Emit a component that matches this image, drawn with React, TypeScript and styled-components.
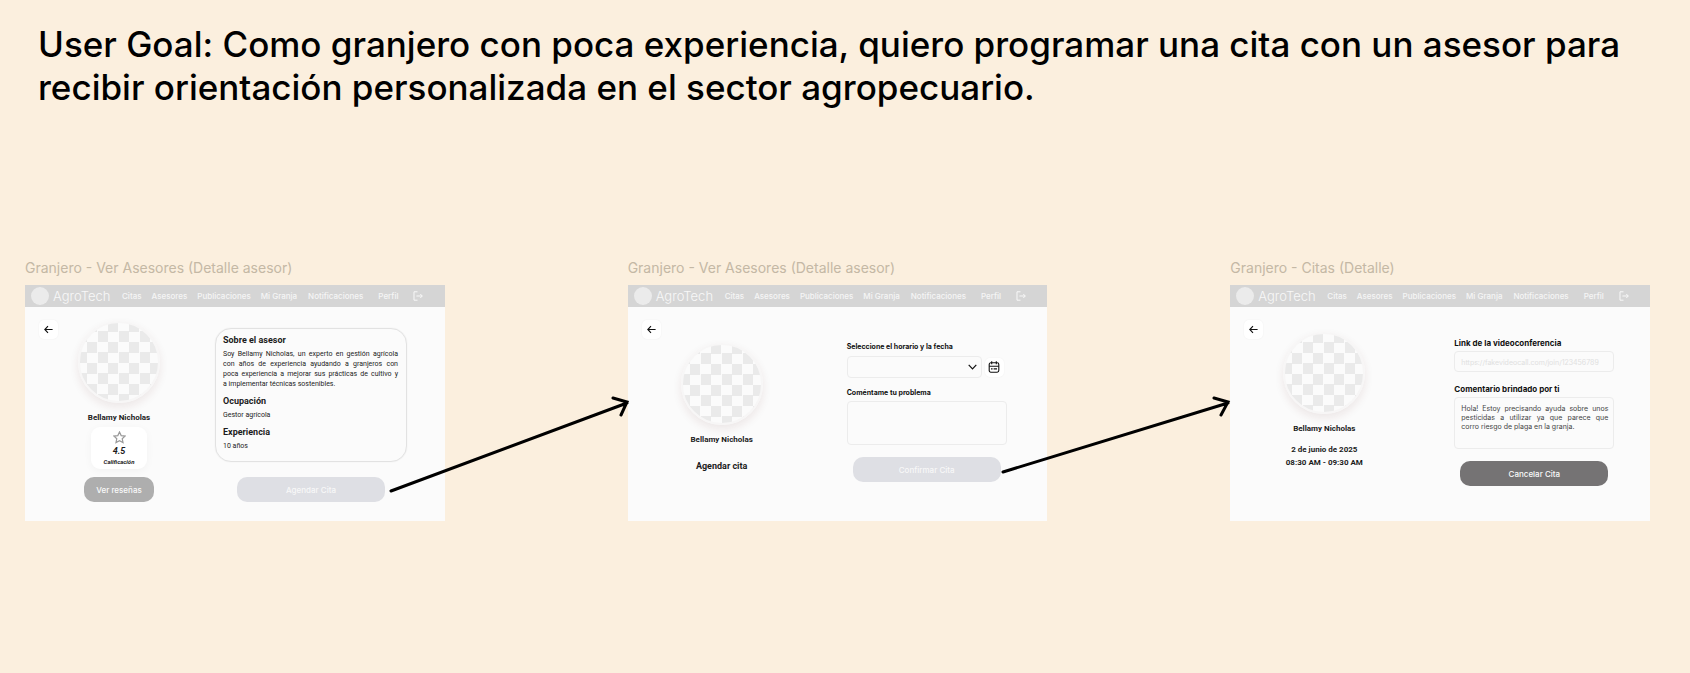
import React from "react";
import styled, { createGlobalStyle } from "styled-components";

const GlobalStyle = createGlobalStyle`
  *, *::before, *::after { box-sizing: border-box; }
  body {
    margin: 0;
    background: #fbefde;
    font-family: Roboto, "Liberation Sans", sans-serif;
    color: #1c1c1c;
  }
  h1, h2, h3, p, ul { margin: 0; padding: 0; }
  button, input, select, textarea { font-family: inherit; }
`;

const Page = styled.main`
  display: flex;
  flex-direction: column;
  gap: 150px;
  padding: 23px 40px 60px 25px;
`;

const Goal = styled.h1`
  padding: 0 0 0 13px;
  font: 500 35px/43px Inter, "Liberation Sans", sans-serif;
  color: #000;
`;

const Flow = styled.section`
  position: relative;
  display: grid;
  grid-template-columns: repeat(3, minmax(0, 1fr));
  column-gap: 183px;
`;

const Frame = styled.article`
  display: flex;
  flex-direction: column;
  gap: 8px;
`;

const FrameName = styled.h2`
  font: 400 14px/18px Inter, "Liberation Sans", sans-serif;
  color: #c4b8a5;
  white-space: nowrap;
`;

const Screen = styled.div`
  display: flex;
  flex-direction: column;
  height: 236px;
  background: #fbfbfb;
`;

const TopBar = styled.header`
  display: flex;
  align-items: center;
  height: 22px;
  padding: 0 6px;
  background: #d5d5d5;
`;

const Brand = styled.a`
  display: flex;
  align-items: center;
  gap: 4px;
  width: 91px;
  font: 300 13px/18px Inter, sans-serif;
  color: #f8f8f8;
  text-decoration: none;
`;

const Logo = styled.span`
  width: 18px;
  height: 18px;
  border-radius: 50%;
  background: #ebebeb;
`;

const Nav = styled.nav`
  display: flex;
  align-items: center;
  gap: 11px;
`;

const Links = styled.div<{ $gap: number }>`
  display: flex;
  align-items: center;
  gap: ${(p) => p.$gap}px;
`;

const NavLink = styled.a`
  font: 500 8px/12px Inter, sans-serif;
  color: #f5f5f5;
  text-decoration: none;
  white-space: nowrap;
`;

const IconButton = styled.button`
  display: flex;
  align-items: center;
  justify-content: center;
  flex: none;
  width: 19px;
  height: 19px;
  padding: 0;
  border: 0;
  border-radius: 5px;
  background: #fff;
  color: #111;
  box-shadow: 0 0 2px rgba(0, 0, 0, 0.06);
`;

const LogoutButton = styled(IconButton)`
  width: 10px;
  height: 10px;
  background: none;
  box-shadow: none;
  color: #f8f8f8;
`;

const Content = styled.div`
  display: grid;
  grid-template-columns: 19px 122px 1fr;
  padding: 13px 14px 0;
`;

const Profile = styled.div<{ $top: number }>`
  display: flex;
  flex-direction: column;
  align-items: center;
  padding-top: ${(p) => p.$top}px;
`;

const Avatar = styled.div`
  width: 82px;
  height: 82px;
  border: 2px solid #f7f6f6;
  border-radius: 50%;
  background: conic-gradient(#fbfbfb 25%, #eaeaea 0 50%, #fbfbfb 0 75%, #eaeaea 0) 7px -2px / 21px 21px;
  box-shadow: 0 4px 10px rgba(90, 20, 20, 0.09);
`;

const Name = styled.h3`
  margin-top: 10px;
  font-size: 8px;
  line-height: 10px;
  font-weight: 700;
`;

const Rating = styled.div`
  display: flex;
  flex-direction: column;
  align-items: center;
  width: 56px;
  height: 42px;
  margin-top: 4px;
  padding-top: 4px;
  border-radius: 9px;
  background: #fff;
  box-shadow: 0 2px 8px rgba(0, 0, 0, 0.04);
  font-style: italic;
  font-weight: 700;
`;

const Score = styled.p`
  font-size: 9px;
  line-height: 14px;
`;

const ScoreLabel = styled.p`
  font-size: 6px;
  line-height: 8px;
`;

const tones = {
  grey: ["#aeaeae", "#fafafa"],
  pale: ["#dedfe4", "#f8f8f8"],
  dark: ["#757374", "#fafafa"],
};

const Action = styled.button<{ $tone: keyof typeof tones; $small?: boolean }>`
  width: ${(p) => (p.$small ? 70 : 148)}px;
  height: 25px;
  padding: 0;
  border: 0;
  border-radius: 10px;
  background: ${(p) => tones[p.$tone][0]};
  color: ${(p) => tones[p.$tone][1]};
  font: 500 8px/12px Inter, sans-serif;
`;

const ReviewsAction = styled(Action)`
  margin-top: 8px;
`;

const ScreenTitle = styled.p`
  margin-top: 15px;
  font-size: 9px;
  line-height: 12px;
  font-weight: 700;
`;

const Schedule = styled.p`
  margin-top: 9px;
  font-size: 8px;
  line-height: 13px;
  font-weight: 700;
  text-align: center;
`;

const Side = styled.div<{ $left: number; $top: number; $width: number }>`
  display: flex;
  flex-direction: column;
  width: ${(p) => p.$width}px;
  margin-left: ${(p) => p.$left}px;
  padding-top: ${(p) => p.$top}px;
`;

const About = styled.section`
  display: flex;
  flex-direction: column;
  height: 134px;
  margin-bottom: 15px;
  padding: 4px 8px 4px 7px;
  border: 1px solid #e2e2e2;
  border-radius: 16px;
  box-shadow: 0 0 1px #ddd;
`;

const AboutTitle = styled.h3`
  font-size: 9px;
  line-height: 14px;
  font-weight: 700;
`;

const AboutText = styled.p`
  margin: 2px 0 5px;
  font-size: 7px;
  line-height: 10px;
  text-align: justify;
`;

const Label = styled.label<{ $size: number }>`
  font: 700 ${(p) => p.$size}px/10px Inter, sans-serif;
  color: #111;
`;

const fieldBox = `
  display: block;
  margin: 0;
  border: 1px solid #ececec;
  border-radius: 4px;
  background: #fbfbfb;
  outline: 0;
`;

const Row = styled.div`
  display: flex;
  align-items: center;
  gap: 3px;
  margin: 4px 0 10px;
`;

const SelectWrap = styled.div`
  display: grid;
  flex: none;
  width: 135px;
  align-items: center;
  & > * { grid-area: 1 / 1; }
  & > svg { justify-self: end; margin-right: 5px; pointer-events: none; }
`;

const Select = styled.select`
  ${fieldBox}
  width: 100%;
  height: 22px;
  appearance: none;
`;

const LinkInput = styled.input`
  ${fieldBox}
  width: 100%;
  height: 21px;
  margin: 3px 0 12px;
  padding: 2px 6px 0;
  font: 400 7px/10px Inter, sans-serif;
  &::placeholder { color: #e0e0e0; opacity: 1; }
`;

const Comment = styled.textarea<{ $height: number }>`
  ${fieldBox}
  width: 100%;
  height: ${(p) => p.$height}px;
  margin: 3px 0 12px;
  padding: 6px 5px 0 6px;
  resize: none;
  overflow: hidden;
  font: 400 7px/9px Inter, sans-serif;
  color: #444;
  text-align: justify;
`;

const Centered = styled.div`
  display: flex;
  justify-content: center;
`;

const Arrows = styled.svg`
  position: absolute;
  inset: 0;
  width: 100%;
  height: 100%;
  overflow: visible;
  pointer-events: none;
  fill: none;
  stroke: #000;
  stroke-width: 3;
  stroke-linecap: round;
`;

const LogoutIcon = () => (
  <svg width="10" height="10" viewBox="0 0 10 10" fill="none" stroke="currentColor" strokeWidth="1" aria-hidden="true">
    <path d="M4.5 0.8H1V9.2H4.5M3.4 5H9.2M7.3 3L9.3 5L7.3 7" />
  </svg>
);

const BackIcon = () => (
  <svg width="9" height="9" viewBox="0 0 9 9" fill="none" stroke="currentColor" strokeWidth="1.1" aria-hidden="true">
    <path d="M8.6 4.5H0.9M4 1.2L0.8 4.5L4 7.8" />
  </svg>
);

const StarIcon = () => (
  <svg width="13" height="13" viewBox="0 0 24 24" fill="none" stroke="#9a9a9a" strokeWidth="2.2" aria-hidden="true">
    <path d="M12 1.8L15.1 8.5L22.4 9.3L17 14.3L18.5 21.5L12 17.9L5.5 21.5L7 14.3L1.6 9.3L8.9 8.5Z" />
  </svg>
);

const ChevronIcon = () => (
  <svg width="9" height="6" viewBox="0 0 9 6" fill="none" stroke="#111" strokeWidth="1.2" aria-hidden="true">
    <path d="M0.7 0.8L4.5 4.8L8.3 0.8" />
  </svg>
);

const CalendarIcon = () => (
  <svg width="12" height="12" viewBox="0 0 12 12" fill="none" stroke="currentColor" strokeWidth="1.1" aria-hidden="true">
    <rect x="1.2" y="1.8" width="9.6" height="9.4" rx="1.6" />
    <path d="M3.7 0.3V3.2M8.3 0.3V3.2M1.2 5.3H10.8M3 7.9H4.6M5.6 7.9H9" />
  </svg>
);

const bio =
  "Soy Bellamy Nicholas, un experto en gestión agrícola con años de experiencia ayudando a granjeros con poca\u00a0experiencia a mejorar sus prácticas de cultivo y a\u00a0implementar técnicas sostenibles.";

const note =
  "Hola! Estoy precisando ayuda sobre unos pesticidas a utilizar ya que parece que corro\u00a0riesgo de plaga en la granja.";

function Mockup({ name, children }: { name: string; children: React.ReactNode }) {
  return (
    <Frame>
      <FrameName>{name}</FrameName>
      <Screen>
        <TopBar>
          <Brand href="#">
            <Logo />
            AgroTech
          </Brand>
          <Nav>
            <Links $gap={10}>
              {["Citas", "Asesores", "Publicaciones", "Mi Granja"].map((t) => (
                <NavLink key={t} href="#">{t}</NavLink>
              ))}
            </Links>
            <Links $gap={15}>
              <NavLink href="#">Notificaciones</NavLink>
              <NavLink href="#">Perfil</NavLink>
              <LogoutButton aria-label="Salir"><LogoutIcon /></LogoutButton>
            </Links>
          </Nav>
        </TopBar>
        <Content>
          <IconButton aria-label="Volver"><BackIcon /></IconButton>
          {children}
        </Content>
      </Screen>
    </Frame>
  );
}

export default function App() {
  return (
    <>
      <GlobalStyle />
      <Page>
        <Goal>
          User Goal: Como granjero con poca experiencia, quiero programar una cita con un asesor para
          recibir orientación personalizada en el sector agropecuario.
        </Goal>
        <Flow>
          <Mockup name="Granjero - Ver Asesores (Detalle asesor)">
            <Profile $top={1}>
              <Avatar />
              <Name>Bellamy Nicholas</Name>
              <Rating>
                <StarIcon />
                <Score>4.5</Score>
                <ScoreLabel>Calificación</ScoreLabel>
              </Rating>
              <ReviewsAction $tone="grey" $small>Ver reseñas</ReviewsAction>
            </Profile>
            <Side $left={35} $top={8} $width={192}>
              <About>
                <AboutTitle>Sobre el asesor</AboutTitle>
                <AboutText>{bio}</AboutText>
                <AboutTitle>Ocupación</AboutTitle>
                <AboutText>Gestor agrícola</AboutText>
                <AboutTitle>Experiencia</AboutTitle>
                <AboutText>10 años</AboutText>
              </About>
              <Centered>
                <Action $tone="pale">Agendar Cita</Action>
              </Centered>
            </Side>
          </Mockup>

          <Mockup name="Granjero - Ver Asesores (Detalle asesor)">
            <Profile $top={23}>
              <Avatar />
              <Name>Bellamy Nicholas</Name>
              <ScreenTitle>Agendar cita</ScreenTitle>
            </Profile>
            <Side $left={64} $top={22} $width={160}>
              <Label $size={7} htmlFor="slot">Seleccione el horario y la fecha</Label>
              <Row>
                <SelectWrap>
                  <Select id="slot" />
                  <ChevronIcon />
                </SelectWrap>
                <IconButton aria-label="Abrir calendario"><CalendarIcon /></IconButton>
              </Row>
              <Label $size={7} htmlFor="problem">Coméntame tu problema</Label>
              <Comment id="problem" $height={44} />
              <Centered>
                <Action $tone="pale">Confirmar Cita</Action>
              </Centered>
            </Side>
          </Mockup>

          <Mockup name="Granjero - Citas (Detalle)">
            <Profile $top={12}>
              <Avatar />
              <Name>Bellamy Nicholas</Name>
              <Schedule>
                2 de junio de 2025
                <br />
                08:30 AM - 09:30 AM
              </Schedule>
            </Profile>
            <Side $left={69} $top={18} $width={160}>
              <Label $size={8} htmlFor="call">Link de la videoconferencia</Label>
              <LinkInput id="call" placeholder="https://fakevideocall.com/join/123456789" />
              <Label $size={8} htmlFor="note">Comentario brindado por ti</Label>
              <Comment id="note" $height={52} readOnly defaultValue={note} />
              <Centered>
                <Action $tone="dark">Cancelar Cita</Action>
              </Centered>
            </Side>
          </Mockup>

          <Arrows viewBox="0 0 1625 262" preserveAspectRatio="none" aria-hidden="true">
            <path d="M366 232L602 144M588 139L602 143L596 156" />
            <path d="M978 213L1203 144M1189 139L1203 143L1196 156" />
          </Arrows>
        </Flow>
      </Page>
    </>
  );
}
